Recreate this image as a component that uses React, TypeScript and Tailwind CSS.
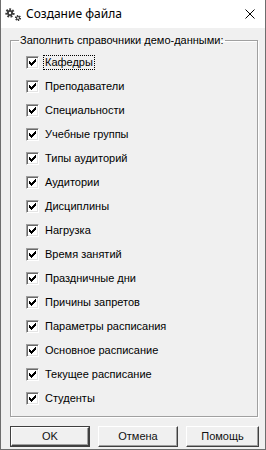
import React from 'react';

const items = [
  'Кафедры',
  'Преподаватели',
  'Специальности',
  'Учебные группы',
  'Типы аудиторий',
  'Аудитории',
  'Дисциплины',
  'Нагрузка',
  'Время занятий',
  'Праздничные дни',
  'Причины запретов',
  'Параметры расписания',
  'Основное расписание',
  'Текущее расписание',
  'Студенты',
];

// classic 7x7 check mark, one 1x3 column per x
const checkCols = [2, 3, 4, 3, 2, 1, 0];

const CheckBox: React.FC = () => (
  <div className="w-[13px] h-[13px] shrink-0 bg-white border border-t-[#a0a0a0] border-l-[#a0a0a0] border-r-white border-b-white shadow-[inset_1px_1px_0_#696969,inset_-1px_-1px_0_#e3e3e3]">
    <svg width="11" height="11" viewBox="0 0 11 11" shapeRendering="crispEdges" className="block">
      {checkCols.map((y, i) => (
        <rect key={i} x={2 + i} y={2 + y} width="1" height="3" fill="#000" />
      ))}
    </svg>
  </div>
);

const Gears: React.FC = () => (
  <svg width="18" height="14" viewBox="0 0 18 14" className="block shrink-0">
    <circle cx="5" cy="5" r="3.2" fill="none" stroke="#3a3a3a" strokeWidth="3" strokeDasharray="1.6 1.2" />
    <circle cx="5" cy="5" r="3" fill="#3a3a3a" />
    <circle cx="5" cy="5" r="1.2" fill="#fff" />
    <circle cx="13" cy="10" r="2.1" fill="none" stroke="#3a3a3a" strokeWidth="2" strokeDasharray="1.1 0.9" />
    <circle cx="13" cy="10" r="2" fill="#3a3a3a" />
    <circle cx="13" cy="10" r="0.9" fill="#fff" />
  </svg>
);

const Btn: React.FC<{ label: string; w: string; def?: boolean }> = ({ label, w, def }) => (
  <div className={`${w} h-[21px] ${def ? 'border border-[#404040]' : ''}`}>
    <button className="w-full h-full flex items-center justify-center bg-[#f0f0f0] border border-t-white border-l-white border-r-[#404040] border-b-[#404040] shadow-[inset_-1px_-1px_0_#a0a0a0] text-[11px] font-normal leading-none text-[#111]">
      {label}
    </button>
  </div>
);

export default function App() {
  return (
    <div className="w-[266px] h-[450px] flex flex-col bg-[#f0f0f0] border-x border-b border-[#6e6e6e] font-['Liberation_Sans',Arial,sans-serif] text-black overflow-hidden">
      <div className="h-[28px] bg-white flex items-center shrink-0">
        <div className="ml-[4px] mt-[1px]">
          <Gears />
        </div>
        <span className="ml-[3px] text-[12px] font-['Noto_Sans',sans-serif]">Создание файла</span>
        <svg width="10" height="10" viewBox="0 0 10 10" className="ml-auto mr-[10px]">
          <path d="M0.5 0.5 L9.5 9.5 M9.5 0.5 L0.5 9.5" stroke="#000" strokeWidth="1" />
        </svg>
      </div>

      <fieldset className="flex-1 min-h-0 mt-[6px] mb-[9px] ml-[9px] w-[248px] border border-[#a0a0a0] shadow-[inset_1px_1px_0_#fff,1px_1px_0_#fff]">
        <legend className="ml-[8px] px-[1px] text-[11px] leading-[13px]">Заполнить справочники демо-данными:</legend>
        <div className="pt-[3px] flex flex-col">
          {items.map((t, i) => (
            <div key={t} className="h-[24px] flex items-center pl-[15px]">
              <CheckBox />
              <span
                className={`ml-[4px] px-[1px] text-[11px] leading-[13px] border ${
                  i === 0 ? 'border-dotted border-black' : 'border-transparent'
                }`}
              >
                {t}
              </span>
            </div>
          ))}
        </div>
      </fieldset>

      <div className="mb-[2px] flex pl-[9px] gap-[8px] shrink-0">
        <Btn label="OK" w="w-[80px]" def />
        <Btn label="Отмена" w="w-[80px]" />
        <Btn label="Помощь" w="w-[73px]" />
      </div>
    </div>
  );
}
